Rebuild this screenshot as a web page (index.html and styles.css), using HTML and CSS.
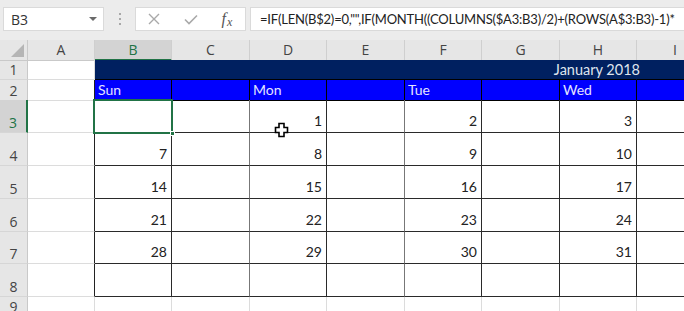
FILE: index.html
```html
<!DOCTYPE html>
<html lang="en">
<head>
    <meta charset="UTF-8">
    <title>Calendar sheet</title>
    <link rel="stylesheet" href="styles.css">
</head>
<body>
<div class="app">
    <div class="toolbar">
        <div class="namebox"><span>B3</span><span class="caret"></span></div>
        <div class="grip"><i></i><i></i><i></i></div>
        <div class="fxbtns">
            <svg width="12" height="12" viewBox="0 0 12 12"><path d="M1 1 L11 11 M11 1 L1 11" stroke="#a9a9a9" stroke-width="1.4" fill="none"/></svg>
            <svg width="14" height="11" viewBox="0 0 14 11"><path d="M1 5.5 L5 9.5 L13 1.5" stroke="#a9a9a9" stroke-width="1.6" fill="none"/></svg>
            <span class="fx"><i>f</i><i class="x">x</i></span>
        </div>
        <div class="formula">=IF(LEN(B$2)=0,"",IF(MONTH((COLUMNS($A3:B3)/2)+(ROWS(A$3:B3)-1)*</div>
    </div>

    <div class="sheet">
        <div class="row head">
            <div class="corner"><span class="tri"></span></div>
            <div class="colh">A</div>
            <div class="colh sel">B</div>
            <div class="colh">C</div>
            <div class="colh">D</div>
            <div class="colh">E</div>
            <div class="colh">F</div>
            <div class="colh">G</div>
            <div class="colh">H</div>
            <div class="colh">I</div>
        </div>

        <div class="row r-short">
            <div class="rowh">1</div>
            <div class="c"></div>
            <div class="c navy title"><span>January 2018</span></div>
            <div class="c navy"></div>
        </div>

        <div class="row r-short">
            <div class="rowh">2</div>
            <div class="c edge"></div>
            <div class="c day">Sun</div>
            <div class="c day"></div>
            <div class="c day">Mon</div>
            <div class="c day"></div>
            <div class="c day">Tue</div>
            <div class="c day"></div>
            <div class="c day">Wed</div>
            <div class="c day"></div>
        </div>

        <div class="row r-tall">
            <div class="rowh sel">3</div>
            <div class="c edge"></div>
            <div class="c box"></div>
            <div class="c box soft"></div>
            <div class="c box">1</div>
            <div class="c box soft"></div>
            <div class="c box">2</div>
            <div class="c box"></div>
            <div class="c box">3</div>
            <div class="c box"></div>
        </div>

        <div class="row r-tall">
            <div class="rowh">4</div>
            <div class="c edge"></div>
            <div class="c box">7</div>
            <div class="c box soft"></div>
            <div class="c box">8</div>
            <div class="c box soft"></div>
            <div class="c box">9</div>
            <div class="c box"></div>
            <div class="c box">10</div>
            <div class="c box"></div>
        </div>

        <div class="row r-tall">
            <div class="rowh">5</div>
            <div class="c edge"></div>
            <div class="c box">14</div>
            <div class="c box soft"></div>
            <div class="c box">15</div>
            <div class="c box soft"></div>
            <div class="c box">16</div>
            <div class="c box"></div>
            <div class="c box">17</div>
            <div class="c box"></div>
        </div>

        <div class="row r-tall">
            <div class="rowh">6</div>
            <div class="c edge"></div>
            <div class="c box">21</div>
            <div class="c box soft"></div>
            <div class="c box">22</div>
            <div class="c box soft"></div>
            <div class="c box">23</div>
            <div class="c box"></div>
            <div class="c box">24</div>
            <div class="c box"></div>
        </div>

        <div class="row r-tall r7">
            <div class="rowh">7</div>
            <div class="c edge"></div>
            <div class="c box">28</div>
            <div class="c box soft"></div>
            <div class="c box">29</div>
            <div class="c box soft"></div>
            <div class="c box">30</div>
            <div class="c box"></div>
            <div class="c box">31</div>
            <div class="c box"></div>
        </div>

        <div class="row r-tall">
            <div class="rowh">8</div>
            <div class="c edge"></div>
            <div class="c box"></div>
            <div class="c box soft"></div>
            <div class="c box"></div>
            <div class="c box soft"></div>
            <div class="c box"></div>
            <div class="c box"></div>
            <div class="c box"></div>
            <div class="c box"></div>
        </div>

        <div class="row r-last">
            <div class="rowh">9</div>
            <div class="c"></div>
            <div class="c"></div>
            <div class="c"></div>
            <div class="c"></div>
            <div class="c"></div>
            <div class="c"></div>
            <div class="c"></div>
            <div class="c"></div>
            <div class="c"></div>
        </div>
    </div>

    <!-- active cell B3 -->
    <div class="selection"><span class="handle"></span></div>

    <svg class="cursor" width="15" height="16" viewBox="0 0 15 16">
        <path d="M5 1.5 H10 V5.5 H13.5 V10.5 H10 V14.5 H5 V10.5 H1.5 V5.5 H5 Z" fill="#fff" stroke="#000" stroke-width="1.6"/>
    </svg>
</div>
</body>
</html>
```

FILE: styles.css
```css
* { box-sizing: border-box; }
body { margin: 0; background: #fff; font-family: 'Open Sans', 'Noto Sans', sans-serif; color: #222; }

.app { position: relative; width: 684px; height: 311px; overflow: hidden; }

/* formula bar */
.toolbar { height: 40px; background: #ececec; display: flex; align-items: flex-start; padding: 7px 0 0 3px; }
.namebox { flex: 0 0 101px; height: 24px; background: #fff; border: 1px solid #dadada; display: flex; align-items: center; justify-content: space-between; padding: 0 6px 0 7px; font-size: 14px; color: #333; }
.caret { width: 0; height: 0; border-left: 4px solid transparent; border-right: 4px solid transparent; border-top: 4px solid #6a6a6a; }
.grip { flex: 0 0 2px; margin: 6px 14px 0 15px; display: flex; flex-direction: column; gap: 3px; }
.grip i { display: block; width: 2px; height: 2px; background: #a8a8a8; }
.fxbtns { flex: 0 0 109px; height: 24px; background: #fff; border: 1px solid #dadada; display: grid; grid-template-columns: 36px 37px 36px; align-items: center; justify-items: center; }
.fx { font-family: 'Liberation Serif', serif; font-style: italic; font-size: 16px; color: #555; line-height: 1; }
.fx i { font-style: italic; }
.fx .x { font-size: 12px; position: relative; top: 2px; margin-left: 1px; }
.formula { flex: 1; margin-left: 4px; height: 24px; background: #fff; border: 1px solid #dadada; border-right: none; padding: 2px 0 0 9px; font-family: 'Lato', sans-serif; font-size: 13px; letter-spacing: -0.2px; line-height: 19px; white-space: nowrap; overflow: hidden; color: #222; }

/* grid */
.row { display: grid; grid-template-columns: 28px 67px 77px 78px 77px 78px 77px 78px 77px 77px; }
.head { height: 20px; }
.r-short { height: 20px; }
.r-tall { height: 33px; }
.r7 { height: 32px; }
.r-last { height: 20px; }

.corner { background: #e6e6e6; border-right: 1px solid #c9c9c9; border-bottom: 1px solid #c9c9c9; position: relative; }
.tri { position: absolute; right: 3px; bottom: 3px; width: 0; height: 0; border-left: 13px solid transparent; border-bottom: 13px solid #b5b5b5; }
.colh { background: #e6e6e6; border-right: 1px solid #cfcfcf; border-bottom: 1px solid #c9c9c9; text-align: center; font-size: 14px; line-height: 19px; color: #444; }
.colh.sel { background: #d3d3d3; color: #217346; border-bottom: 2px solid #217346; }

.rowh { background: #e6e6e6; border-right: 1px solid #c9c9c9; border-bottom: 1px solid #d6d6d6; display: flex; align-items: flex-end; justify-content: center; font-size: 14px; line-height: 18px; color: #444; }
.rowh.sel { background: #d3d3d3; color: #217346; border-right: 2px solid #217346; }
.r-last .rowh { align-items: flex-start; line-height: 20px; }

.c { border-right: 1px solid #dcdcdc; border-bottom: 1px solid #dcdcdc; font-family: 'Lato', 'Open Sans', sans-serif; font-size: 14px; }
.edge { border-right-color: #222; }
.navy { background: #002060; border-right-color: #002060; border-bottom-color: #000; }
.title { grid-column: span 7; display: flex; align-items: center; justify-content: flex-end; color: #dfe4ee; font-size: 14.5px; position: relative; z-index: 1; }
.title span { margin-right: -4px; }
.day { background: #0000ff; border-right-color: #000; border-bottom-color: #000; color: #e4e4ff; padding-left: 3px; line-height: 20px; }
.box { border-right-color: #2a2a2a; border-bottom-color: #2a2a2a; display: flex; align-items: flex-end; justify-content: flex-end; padding: 0 4px 2px 0; color: #222; line-height: 18px; }
.box.soft { border-right-color: #777; }

/* active cell */
.selection { position: absolute; left: 93px; top: 99px; width: 80px; height: 35px; border: 2px solid #217346; }
.handle { position: absolute; right: -4px; bottom: -4px; width: 5px; height: 5px; background: #217346; border: 1px solid #fff; }

.cursor { position: absolute; left: 274px; top: 122px; }
```
